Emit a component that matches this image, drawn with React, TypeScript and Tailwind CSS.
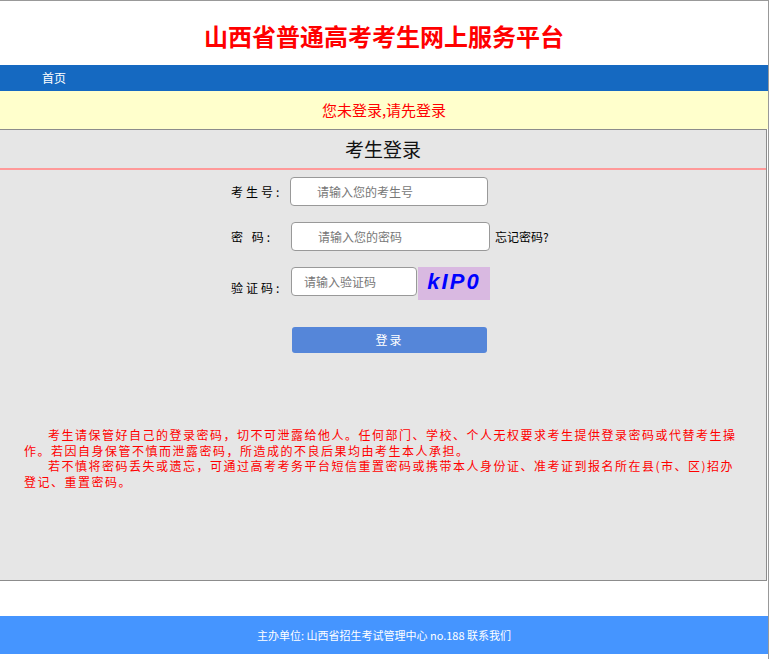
import React from 'react';

const cjk = "font-['Noto_Sans_CJK_SC','Noto_Sans',sans-serif]";

export default function App() {
  return (
    <div className={`${cjk} w-[769px] min-h-screen border-t border-r border-[#999] bg-white`}>
      <header className="h-[64px] pt-[6px] flex items-center justify-center">
        <h1 className="text-[24px] leading-[30px] font-bold text-[#ff0000]">山西省普通高考考生网上服务平台</h1>
      </header>

      <nav className="h-[26px] bg-[#1569c1] flex items-center pl-[42px]">
        <a className="text-white text-[12px] leading-[16px]">首页</a>
      </nav>

      <div className="h-[38px] bg-[#ffffcc] flex items-center justify-center">
        <span className="text-[15px] leading-[20px] text-[#ff0000]">您未登录,请先登录</span>
      </div>

      <section className="w-[767px] h-[452px] bg-[#e6e6e6] border-t border-r border-b border-[#8c8c8c]">
        <div className="h-[38px] flex items-center justify-center">
          <h2 className="text-[19px] leading-[24px] text-[#111]">考生登录</h2>
        </div>
        <div className="h-[2px] bg-[#ff9999]"></div>

        <form className="ml-[231px] mt-[7px] text-[12px] leading-[16px] text-black" onSubmit={e => e.preventDefault()}>
          <div className="flex items-center">
            <label className="w-[59px] tracking-[3px]">考生号:</label>
            <input
              className="w-[198px] h-[29px] bg-white border border-[#999] rounded-[4px] pl-[26px] text-[12px] placeholder:text-[#777] outline-none"
              placeholder="请输入您的考生号"
            />
          </div>

          <div className="flex items-center mt-[16px]">
            <label className="w-[60px] tracking-[3px]">密 码:</label>
            <input
              type="password"
              className="w-[199px] h-[29px] bg-white border border-[#999] rounded-[4px] pl-[26px] text-[12px] placeholder:text-[#777] outline-none"
              placeholder="请输入您的密码"
            />
            <a className="ml-[5px] text-black">忘记密码?</a>
          </div>

          <div className="flex items-start mt-[16px]">
            <label className="w-[60px] pt-[13px] tracking-[3px]">验证码:</label>
            <input
              className="w-[126px] h-[29px] bg-white border border-[#999] rounded-[4px] pl-[12px] text-[12px] placeholder:text-[#777] outline-none"
              placeholder="请输入验证码"
            />
            <div className="ml-px w-[72px] h-[33px] bg-[#d9b9e1] flex items-center justify-center pb-[4px]">
              <span className="font-['Liberation_Sans',Arial,sans-serif] italic font-bold text-[22px] leading-[24px] tracking-[2px] text-[#0000ff]">kIP0</span>
            </div>
          </div>

          <button
            type="submit"
            className="ml-[61px] mt-[27px] w-[195px] h-[26px] bg-[#5586d9] rounded-[3px] text-white text-[12px] leading-[16px] tracking-[2px]"
          >
            登录
          </button>
        </form>

        <div className="mx-[24px] mt-[74px] text-[12px] leading-[15.5px] tracking-[1.5px] text-[#ff0000]">
          <p className="indent-[24px]">
            考生请保管好自己的登录密码，切不可泄露给他人。任何部门、学校、个人无权要求考生提供登录密码或代替考生操作。若因自身保管不慎而泄露密码，所造成的不良后果均由考生本人承担。
          </p>
          <p className="indent-[24px]">
            若不慎将密码丢失或遗忘，可通过高考考务平台短信重置密码或携带本人身份证、准考证到报名所在县(市、区)招办登记、重置密码。
          </p>
        </div>
      </section>

      <footer className="mt-[35px] h-[38px] bg-[#4595ff] flex items-center justify-center">
        <span className="text-white text-[11px] leading-[14px]">主办单位: 山西省招生考试管理中心 no.188 联系我们</span>
      </footer>
    </div>
  );
}
